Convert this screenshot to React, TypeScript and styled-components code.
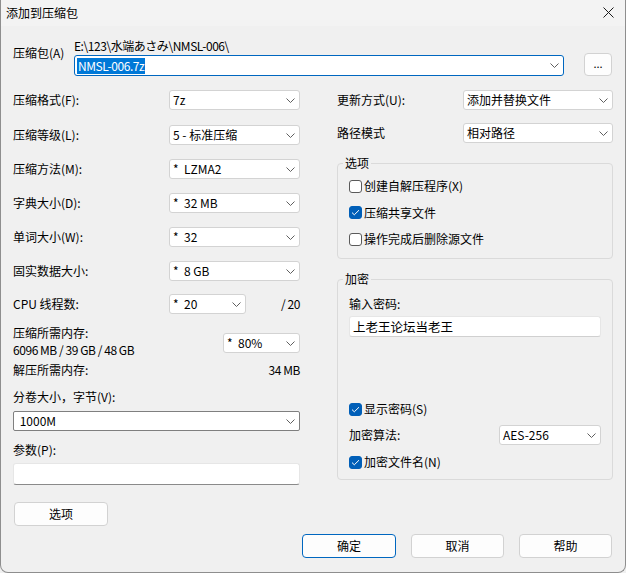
import React from "react";
import styled, { createGlobalStyle } from "styled-components";

const Global = createGlobalStyle`
  html, body { margin: 0; padding: 0; background: #f0f0f0; }
  body {
    font-family: "Noto Sans CJK SC", "Noto Sans", sans-serif;
    font-size: 12px;
    color: #000;
  }
  * { box-sizing: border-box; }
`;

const Window = styled.div`
  width: 626px;
  height: 573px;
  background: #f0f0f0;
  border: 1px solid #8e8e8e;
  border-top: none;
  border-radius: 0 0 8px 8px;
  display: flex;
  flex-direction: column;
  overflow: hidden;
`;

const TitleBar = styled.div`
  height: 26px;
  flex: none;
  display: flex;
  align-items: center;
  justify-content: space-between;
  padding: 0 11px 1px 5px;
  background: #f3f3f3;
`;

const TitleText = styled.span`
  line-height: 16px;
`;

const Body = styled.div`
  flex: 1;
  padding: 12px 12px 0 12px;
  display: flex;
  flex-direction: column;
`;

const ArchiveGrid = styled.div`
  display: grid;
  grid-template-columns: 61px 490px 20px 28px;
  grid-template-rows: 16px 21px;
  row-gap: 1px;
`;

const ArchiveLabel = styled.span`
  grid-row: 1 / 3;
  grid-column: 1;
  align-self: start;
  margin-top: 7px;
  line-height: 16px;
  white-space: nowrap;
`;

const Latin = styled.span`
  letter-spacing: -0.45px;
`;

const PathText = styled(Latin)`
  grid-row: 1;
  grid-column: 2;
  line-height: 16px;
  white-space: nowrap;
`;

const BrowseButton = styled.button`
  grid-row: 1 / 3;
  grid-column: 4;
  align-self: start;
  margin-top: 15px;
  width: 28px;
  height: 23px;
  padding: 0 0 4px 0;
  background: #fdfdfd;
  border: 1px solid #d2d2d2;
  border-radius: 4px;
  font: inherit;
  font-size: 11px;
  color: #000;
`;

const ComboBox = styled.div<{ $w?: string; $tone?: "plain" | "edit" | "focus"; $h?: number }>`
  width: ${(p) => p.$w ?? "131px"};
  height: ${(p) => p.$h ?? 20}px;
  flex: none;
  display: flex;
  align-items: center;
  justify-content: space-between;
  background: #fff;
  border: 1px solid
    ${(p) => (p.$tone === "focus" ? "#0067c0" : p.$tone === "edit" ? "#7f7f7f" : "#d3d3d3")};
  border-radius: ${(p) => (p.$tone === "edit" ? "2px" : "3px")};
  padding: 0 4px 0 ${(p) => (p.$tone === "focus" ? "2px" : "3px")};
  white-space: pre;
  line-height: 16px;
`;

const ArchiveCombo = styled(ComboBox)`
  grid-row: 2;
  grid-column: 2;
`;

const Selected = styled(Latin)`
  background: #0078d7;
  color: #fff;
  padding: 0 1px;
  line-height: 16px;
`;

const Columns = styled.div`
  margin-top: 14px;
  display: grid;
  grid-template-columns: 287px 276px;
  column-gap: 37px;
  align-items: start;
`;

const Column = styled.div`
  display: flex;
  flex-direction: column;
`;

const FieldRow = styled.div<{ $mt?: number }>`
  display: flex;
  align-items: center;
  justify-content: space-between;
  margin-top: ${(p) => p.$mt ?? 0}px;
  min-height: 20px;
`;

const Label = styled.span`
  line-height: 16px;
  white-space: nowrap;
`;

const CpuRow = styled.div`
  margin-top: 13px;
  display: grid;
  grid-template-columns: 156px 77px 1fr;
  align-items: center;
`;

const RightText = styled(Latin)`
  text-align: right;
  line-height: 16px;
  white-space: nowrap;
`;

const MemoryRow = styled.div`
  margin-top: 10px;
  display: flex;
  justify-content: space-between;
  align-items: flex-start;
`;

const MemText = styled.div`
  line-height: 17px;
  white-space: nowrap;
`;

const MemCombo = styled(ComboBox)`
  margin-top: 9px;
`;

const TextRow = styled.div<{ $mt: number }>`
  margin-top: ${(p) => p.$mt}px;
  display: flex;
  justify-content: space-between;
  line-height: 16px;
`;

const Block = styled.div<{ $mt: number }>`
  margin-top: ${(p) => p.$mt}px;
`;

const TextField = styled.div<{ $h: number; $underline?: boolean }>`
  height: ${(p) => p.$h}px;
  background: #fff;
  border: 1px solid #e6e6e6;
  border-bottom-color: ${(p) => (p.$underline ? "#8a8a8a" : "#d0d0d0")};
  border-radius: 3px;
  padding: 0 3px;
  display: flex;
  align-items: center;
  line-height: 16px;
  font-size: 12.5px;
`;

const PushButton = styled.button<{ $primary?: boolean; $w?: number }>`
  width: ${(p) => p.$w ?? 93}px;
  height: 24px;
  padding: 0;
  background: #fdfdfd;
  border: 1px solid ${(p) => (p.$primary ? "#0067c0" : "#d2d2d2")};
  border-radius: 4px;
  font: inherit;
  color: #000;
  line-height: 16px;
`;

const OptionsButton = styled(PushButton)`
  margin-top: 17px;
  margin-left: 1px;
`;

const GroupBox = styled.fieldset<{ $mt: number; $pt: number; $pb: number }>`
  margin: ${(p) => p.$mt}px 0 0 0;
  min-width: 0;
  border: 1px solid #dadada;
  border-radius: 4px;
  padding: ${(p) => p.$pt}px 11px ${(p) => p.$pb}px 11px;
  display: flex;
  flex-direction: column;
`;

const Legend = styled.legend`
  margin-left: -6px;
  padding: 0 2px;
  line-height: 16px;
`;

const CheckRow = styled.label<{ $mt?: number }>`
  display: flex;
  align-items: center;
  gap: 2px;
  height: 20px;
  margin-top: ${(p) => p.$mt ?? 0}px;
  line-height: 16px;
  white-space: nowrap;
`;

const Box = styled.span<{ $checked?: boolean }>`
  width: 13px;
  height: 13px;
  flex: none;
  border-radius: 3px;
  border: 1px solid ${(p) => (p.$checked ? "#005fb8" : "#5a5a5a")};
  background: ${(p) => (p.$checked ? "#005fb8" : "#fff")};
  display: flex;
  align-items: center;
  justify-content: center;
`;

const Spacer = styled.div<{ $h: number }>`
  height: ${(p) => p.$h}px;
`;

const Footer = styled.div`
  margin-top: 8px;
  display: flex;
  justify-content: flex-end;
  gap: 15px;
  padding-right: 1px;
`;

const Chevron = () => (
  <svg width="9" height="5" viewBox="0 0 9 5">
    <path d="M0.5 0.5 L4.5 4.5 L8.5 0.5" fill="none" stroke="#5f5f5f" strokeWidth="1" />
  </svg>
);

const CloseIcon = () => (
  <svg width="11" height="11" viewBox="0 0 11 11">
    <path d="M0.5 0.5 L10.5 10.5 M10.5 0.5 L0.5 10.5" stroke="#1b1b1b" strokeWidth="1" />
  </svg>
);

const Check = ({ checked, children, mt }: { checked?: boolean; children: React.ReactNode; mt?: number }) => (
  <CheckRow $mt={mt}>
    <Box $checked={checked}>
      {checked && (
        <svg width="9" height="7" viewBox="0 0 9 7">
          <path d="M1 3.6 L3.3 5.8 L8 1.2" fill="none" stroke="#fff" strokeWidth="1" />
        </svg>
      )}
    </Box>
    {children}
  </CheckRow>
);

const Combo = ({ value, w, tone }: { value: string; w?: string; tone?: "plain" | "edit" | "focus" }) => (
  <ComboBox $w={w} $tone={tone}>
    <span>{value}</span>
    <Chevron />
  </ComboBox>
);

const leftRows: { label: string; value: string; mt: number }[] = [
  { label: "压缩格式(F):", value: "7z", mt: 0 },
  { label: "压缩等级(L):", value: "5 - 标准压缩", mt: 15 },
  { label: "压缩方法(M):", value: "*  LZMA2", mt: 14 },
  { label: "字典大小(D):", value: "*  32 MB", mt: 14 },
  { label: "单词大小(W):", value: "*  32", mt: 14 },
  { label: "固实数据大小:", value: "*  8 GB", mt: 14 },
];

export default function App() {
  return (
    <>
      <Global />
      <Window>
        <TitleBar>
          <TitleText>添加到压缩包</TitleText>
          <CloseIcon />
        </TitleBar>
        <Body>
          <ArchiveGrid>
            <ArchiveLabel>压缩包(A)</ArchiveLabel>
            <PathText>E:\123\水端あさみ\NMSL-006\</PathText>
            <ArchiveCombo $w="490px" $tone="focus" $h={21}>
              <Selected>NMSL-006.7z</Selected>
              <Chevron />
            </ArchiveCombo>
            <BrowseButton>...</BrowseButton>
          </ArchiveGrid>

          <Columns>
            <Column>
              {leftRows.map((r) => (
                <FieldRow key={r.label} $mt={r.mt}>
                  <Label>{r.label}</Label>
                  <Combo value={r.value} />
                </FieldRow>
              ))}
              <CpuRow>
                <Label>CPU 线程数:</Label>
                <Combo value="*  20" w="77px" />
                <RightText>/ 20</RightText>
              </CpuRow>
              <MemoryRow>
                <MemText>
                  压缩所需内存:
                  <br />
                  <Latin>6096 MB / 39 GB / 48 GB</Latin>
                </MemText>
                <MemCombo $w="77px">
                  <span>*  80%</span>
                  <Chevron />
                </MemCombo>
              </MemoryRow>
              <TextRow $mt={4}>
                <span>解压所需内存:</span>
                <Latin>34 MB</Latin>
              </TextRow>
              <TextRow $mt={11}>
                <span>分卷大小，字节(V):</span>
              </TextRow>
              <Block $mt={6}>
                <Combo value=" 1000M" w="287px" tone="edit" />
              </Block>
              <TextRow $mt={11}>
                <span>参数(P):</span>
              </TextRow>
              <Block $mt={5}>
                <TextField $h={22} $underline />
              </Block>
              <OptionsButton $w={94}>选项</OptionsButton>
            </Column>

            <Column>
              <FieldRow>
                <Label>更新方式(U):</Label>
                <Combo value="添加并替换文件" w="150px" />
              </FieldRow>
              <FieldRow $mt={13}>
                <Label>路径模式</Label>
                <Combo value="相对路径" w="150px" />
              </FieldRow>
              <GroupBox $mt={12} $pt={5} $pb={9}>
                <Legend>选项</Legend>
                <Check>创建自解压程序(X)</Check>
                <Check checked mt={6.5}>
                  压缩共享文件
                </Check>
                <Check mt={6.5}>操作完成后删除源文件</Check>
              </GroupBox>
              <GroupBox $mt={12} $pt={9} $pb={7}>
                <Legend>加密</Legend>
                <Label>输入密码:</Label>
                <Block $mt={4}>
                  <TextField $h={21}>上老王论坛当老王</TextField>
                </Block>
                <Spacer $h={62} />
                <Check checked>显示密码(S)</Check>
                <FieldRow $mt={6}>
                  <Label>加密算法:</Label>
                  <Combo value="AES-256" w="102px" />
                </FieldRow>
                <Check checked mt={7}>
                  加密文件名(N)
                </Check>
              </GroupBox>
            </Column>
          </Columns>

          <Footer>
            <PushButton $primary $w={94}>确定</PushButton>
            <PushButton>取消</PushButton>
            <PushButton>帮助</PushButton>
          </Footer>
        </Body>
      </Window>
    </>
  );
}
